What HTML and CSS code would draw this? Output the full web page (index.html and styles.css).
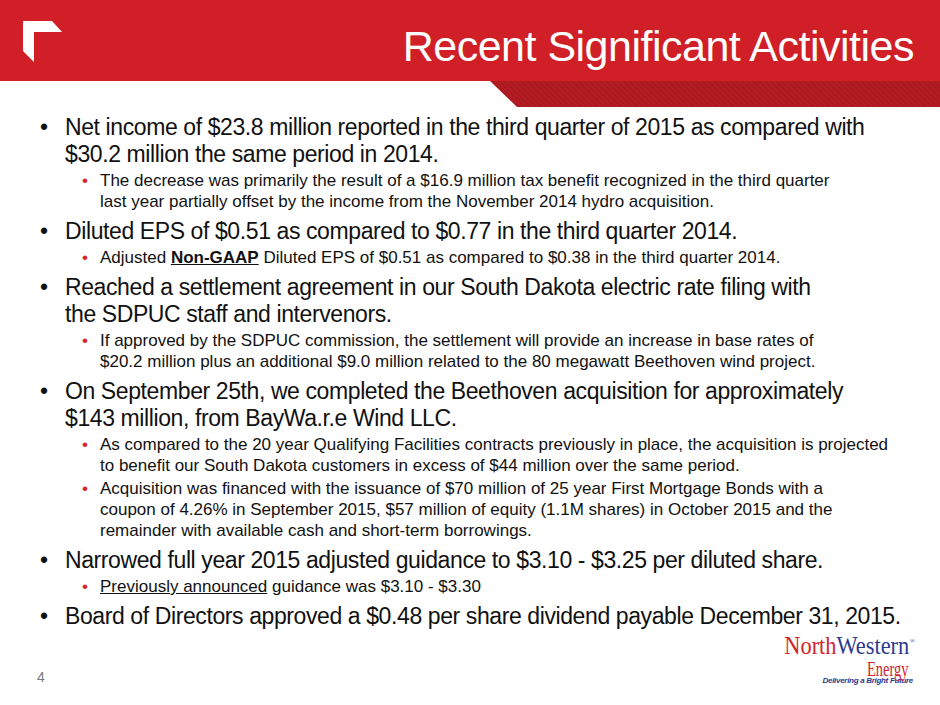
FILE: index.html
```html
<!DOCTYPE html>
<html>
<head>
<meta charset="utf-8">
<link rel="stylesheet" href="styles.css">
</head>
<body>
<header class="header">
  <div class="band">
    <svg class="mark" width="42" height="44" viewBox="0 0 42 44">
      <polygon points="1,1 30,1 40,12 12,12 12,42 1,31" fill="#fff"/>
    </svg>
    <h1 class="title">Recent Significant Activities</h1>
  </div>
  <div class="shade"></div>
</header>
<main class="content">
  <div class="l1"><span class="b">•</span><span class="t">Net income of $23.8 million reported in the third quarter of 2015 as compared with<br>$30.2 million the same period in 2014.</span></div>
  <div class="l2"><span class="b">•</span><span class="t">The decrease was primarily the result of a $16.9 million tax benefit recognized in the third quarter<br>last year partially offset by the income from the November 2014 hydro acquisition.</span></div>
  <div class="l1"><span class="b">•</span><span class="t">Diluted EPS of $0.51 as compared to $0.77 in the third quarter 2014.</span></div>
  <div class="l2"><span class="b">•</span><span class="t">Adjusted <b class="u">Non-GAAP</b> Diluted EPS of $0.51 as compared to $0.38 in the third quarter 2014.</span></div>
  <div class="l1"><span class="b">•</span><span class="t">Reached a settlement agreement in our South Dakota electric rate filing with<br>the SDPUC staff and intervenors.</span></div>
  <div class="l2"><span class="b">•</span><span class="t">If approved by the SDPUC commission, the settlement will provide an increase in base rates of<br>$20.2 million plus an additional $9.0 million related to the 80 megawatt Beethoven wind project.</span></div>
  <div class="l1"><span class="b">•</span><span class="t">On September 25th, we completed the Beethoven acquisition for approximately<br>$143 million, from BayWa.r.e Wind LLC.</span></div>
  <div class="l2"><span class="b">•</span><span class="t">As compared to the 20 year Qualifying Facilities contracts previously in place, the acquisition is projected<br>to benefit our South Dakota customers in excess of $44 million over the same period.</span></div>
  <div class="l2"><span class="b">•</span><span class="t">Acquisition was financed with the issuance of $70 million of 25 year First Mortgage Bonds with a<br>coupon of 4.26% in September 2015, $57 million of equity (1.1M shares) in October 2015 and the<br>remainder with available cash and short-term borrowings.</span></div>
  <div class="l1"><span class="b">•</span><span class="t">Narrowed full year 2015 adjusted guidance to $3.10 - $3.25 per diluted share.</span></div>
  <div class="l2"><span class="b">•</span><span class="t"><span class="u">Previously announced</span> guidance was $3.10 - $3.30</span></div>
  <div class="l1"><span class="b">•</span><span class="t">Board of Directors approved a $0.48 per share dividend payable December 31, 2015.</span></div>
</main>
<footer class="footer">
  <span class="page">4</span>
  <div class="logo">
    <div class="nw"><span class="nwtext"><span class="north">North</span><span class="western">Western</span></span><span class="reg">®</span></div>
    <div class="energy"><span class="entext">Energy</span></div>
    <div class="tag">Delivering a Bright Future</div>
  </div>
</footer>
</body>
</html>
```
FILE: styles.css
```css
html, body {
  margin: 0;
  padding: 0;
  background: #fff;
}
body {
  width: 940px;
  height: 705px;
  overflow: hidden;
  font-family: "Liberation Sans", Arial, sans-serif;
  color: #111;
}
.header {
  display: flex;
  flex-direction: column;
}
.band {
  height: 81px;
  background: #d11f27;
  display: flex;
  align-items: flex-start;
  justify-content: space-between;
  padding: 0 26px 0 22px;
  box-sizing: border-box;
}
.mark {
  margin-top: 20px;
  display: block;
}
.title {
  margin: 21px 0 0 0;
  font-weight: normal;
  font-size: 43px;
  line-height: 50px;
  color: #fff;
  letter-spacing: -0.5px;
}
.shade {
  height: 26px;
  background: repeating-linear-gradient(45deg, #b31c22 0 2px, #aa1a20 2px 4px);
  clip-path: polygon(490px 0, 100% 0, 100% 100%, 517px 100%);
}
.content {
  padding-top: 1px;
}
.l1 {
  display: flex;
  padding-left: 40px;
  font-size: 23px;
  line-height: 27px;
  letter-spacing: -0.4px;
  margin-top: 6px;
}
.l1 .b {
  width: 25px;
  flex: none;
  letter-spacing: 0;
}
.l2 {
  display: flex;
  padding-left: 82px;
  font-size: 17px;
  line-height: 21px;
  margin-top: 2px;
}
.l2 .b {
  width: 18px;
  flex: none;
  color: #e0202a;
}
.u {
  text-decoration: underline;
}
.footer {
  display: flex;
  justify-content: space-between;
  align-items: flex-end;
  padding: 0 25px 0 37px;
  margin-top: 3px;
}
.page {
  font-size: 14px;
  color: #777;
  line-height: 16px;
}
.logo {
  display: flex;
  flex-direction: column;
  align-items: flex-end;
  width: 140px;
}
.nw {
  display: flex;
  align-items: flex-start;
  font-family: "Liberation Serif", "Times New Roman", serif;
  font-size: 26px;
  line-height: 26px;
  white-space: nowrap;
}
.nwtext {
  display: inline-block;
  transform: scaleX(0.86);
  transform-origin: right center;
}
.north {
  color: #d2232a;
}
.western {
  color: #2b3a8f;
}
.reg {
  font-size: 7px;
  line-height: 10px;
  color: #2b3a8f;
  margin-top: 3px;
}
.energy {
  font-family: "Liberation Serif", "Times New Roman", serif;
  font-size: 20px;
  line-height: 20px;
  color: #d2232a;
  margin-right: 7px;
}
.entext {
  display: inline-block;
  transform: scaleX(0.72);
  transform-origin: right center;
}
.tag {
  font-size: 8px;
  font-weight: bold;
  font-style: italic;
  color: #2b3a8f;
  line-height: 8px;
  letter-spacing: -0.3px;
  margin-top: -2px;
  margin-right: 2px;
}
```
